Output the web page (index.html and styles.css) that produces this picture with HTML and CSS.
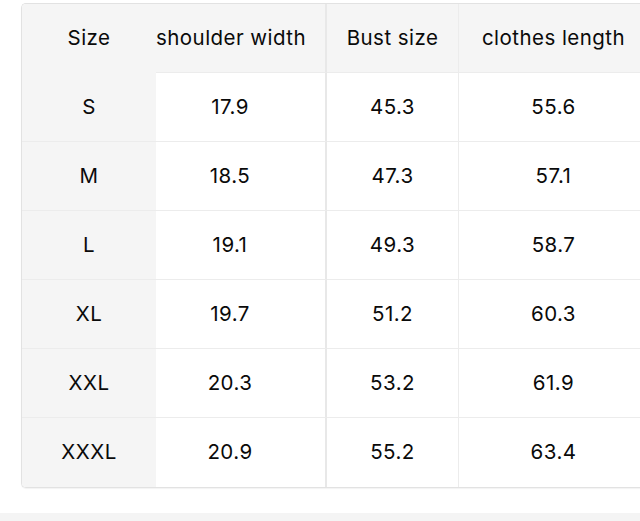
FILE: index.html
```html
<!DOCTYPE html>
<html>
<head>
<meta charset="utf-8">
<link rel="stylesheet" href="styles.css">
</head>
<body>
<div class="page">
  <div class="wrap">
    <table class="size-table">
      <thead>
        <tr>
          <th class="c-size">Size</th>
          <th class="c-shoulder">shoulder width</th>
          <th class="c-bust">Bust size</th>
          <th class="c-length">clothes length</th>
        </tr>
      </thead>
      <tbody>
        <tr><td class="c-size">S</td><td class="c-shoulder">17.9</td><td class="c-bust">45.3</td><td class="c-length">55.6</td></tr>
        <tr><td class="c-size">M</td><td class="c-shoulder">18.5</td><td class="c-bust">47.3</td><td class="c-length">57.1</td></tr>
        <tr><td class="c-size">L</td><td class="c-shoulder">19.1</td><td class="c-bust">49.3</td><td class="c-length">58.7</td></tr>
        <tr><td class="c-size">XL</td><td class="c-shoulder">19.7</td><td class="c-bust">51.2</td><td class="c-length">60.3</td></tr>
        <tr><td class="c-size">XXL</td><td class="c-shoulder">20.3</td><td class="c-bust">53.2</td><td class="c-length">61.9</td></tr>
        <tr><td class="c-size">XXXL</td><td class="c-shoulder">20.9</td><td class="c-bust">55.2</td><td class="c-length">63.4</td></tr>
      </tbody>
    </table>
  </div>
  <div class="strip"></div>
</div>
</body>
</html>
```
FILE: styles.css
```css
html, body {
  margin: 0;
  padding: 0;
  background: #ffffff;
  overflow: hidden;
}
.page {
  width: 640px;
  height: 521px;
  display: flex;
  flex-direction: column;
  overflow: hidden;
}
.wrap {
  padding: 3px 0 0 21px;
  height: 513px;
  box-sizing: border-box;
}
.size-table {
  border-collapse: separate;
  border-spacing: 0;
  border: 1px solid #e2e2e2;
  border-right: none;
  border-radius: 5px 0 0 5px;
  width: 626px;
  table-layout: fixed;
  font-family: "Inter", "Liberation Sans", sans-serif;
  font-size: 20.5px;
  letter-spacing: 0.45px;
  color: #0a0a0a;
  box-shadow: 0 1px 1px rgba(0,0,0,0.05);
  overflow: hidden;
}
.size-table th,
.size-table td {
  height: 69px;
  padding: 0 0 2px 0;
  text-align: center;
  vertical-align: middle;
  font-weight: 400;
  white-space: nowrap;
  border-bottom: 1px solid #ececec;
  box-sizing: border-box;
}
.size-table th {
  background: #f5f5f5;
  height: 69px;
  border-bottom: 1px solid #ececec;
}
.size-table tbody tr:last-child td {
  border-bottom: none;
}
.size-table td {
  background: #ffffff;
}
.size-table .c-size {
  width: 134px;
  background: #f5f5f5;
}
.size-table .c-shoulder {
  width: 171px;
  padding-right: 21px;
  border-right: 2px solid #e8e8e8;
}
.size-table .c-bust {
  width: 132px;
  border-right: 1px solid #ececec;
}
.size-table .c-length {
  width: 189px;
}
.size-table th.c-size {
  border-bottom-color: #f5f5f5;
}
.strip {
  height: 8px;
  background: #f4f4f4;
}
```
